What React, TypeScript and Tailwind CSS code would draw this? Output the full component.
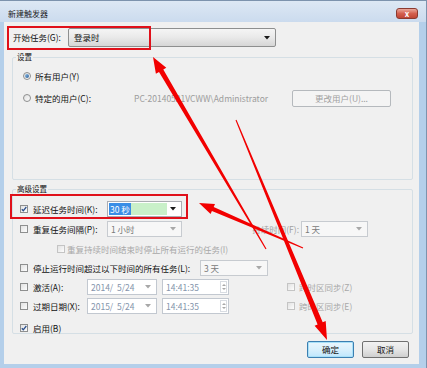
import clsx from "clsx"

// 红色标注箭头：从细的尾部到粗的头部
function arrowPoints(tx: number, ty: number, hx: number, hy: number, w0: number, w1: number, hl: number, hw: number) {
  const dx = hx - tx
  const dy = hy - ty
  const len = Math.hypot(dx, dy)
  const ux = dx / len
  const uy = dy / len
  const nx = -uy
  const ny = ux
  const bx = hx - ux * hl
  const by = hy - uy * hl
  const p = (x: number, y: number) => `${x.toFixed(1)},${y.toFixed(1)}`
  return [
    p(tx + (nx * w0) / 2, ty + (ny * w0) / 2),
    p(bx + (nx * w1) / 2, by + (ny * w1) / 2),
    p(bx + (nx * hw) / 2, by + (ny * hw) / 2),
    p(hx, hy),
    p(bx - (nx * hw) / 2, by - (ny * hw) / 2),
    p(bx - (nx * w1) / 2, by - (ny * w1) / 2),
    p(tx - (nx * w0) / 2, ty - (ny * w0) / 2),
  ].join(" ")
}

function DownArrow({ disabled }: { disabled?: boolean }) {
  return (
    <svg width="6" height="4" viewBox="0 0 6 4" className="shrink-0">
      <polygon points="0,0 6,0 3,3.5" fill={disabled ? "#a8a8a8" : "#1a1a1a"} />
    </svg>
  )
}

function Check({ checked, disabled }: { checked?: boolean; disabled?: boolean }) {
  return (
    <span
      className={clsx(
        "flex h-[8px] w-[8px] shrink-0 items-center justify-center border bg-linear-to-br from-[#e2e2e2] to-[#fdfdfd]",
        disabled ? "border-[#c4c4c4]" : "border-[#8e8f8f]",
      )}
    >
      {checked && (
        <svg width="6" height="6" viewBox="0 0 6 6">
          <path d="M0.8 3.2 L2.3 4.8 L5.3 1" stroke="#2b4f8c" strokeWidth="1.3" fill="none" />
        </svg>
      )}
    </span>
  )
}

function Radio({ checked }: { checked?: boolean }) {
  return (
    <span className="flex h-[8px] w-[8px] shrink-0 items-center justify-center rounded-full border border-[#8e8f8f] bg-linear-to-br from-[#e0e0e0] to-[#fcfcfc]">
      {checked && <span className="h-[4px] w-[4px] rounded-full bg-linear-to-br from-[#8fc0e8] to-[#2a5d96]" />}
    </span>
  )
}

function DateBox({ text, w, spin }: { text: string; w: string; spin?: boolean }) {
  return (
    <div className={clsx("flex h-[16px] items-center justify-between border border-[#c2c8d0] bg-white pl-[3px] text-[#8494ab]", w)}>
      <span className="whitespace-pre">{text}</span>
      {spin ? (
        <div className="mr-[1px] flex h-[12px] w-[7px] flex-col items-center justify-center gap-[2px] border border-[#d8dce2]">
          <svg width="4" height="2" viewBox="0 0 4 2">
            <polygon points="0,2 4,2 2,0" fill="#a8a8a8" />
          </svg>
          <svg width="4" height="2" viewBox="0 0 4 2">
            <polygon points="0,0 4,0 2,2" fill="#a8a8a8" />
          </svg>
        </div>
      ) : (
        <span className="mr-[5px]">
          <DownArrow disabled />
        </span>
      )}
    </div>
  )
}

export default function App() {
  return (
    <div className="relative h-[368px] w-[427px] overflow-hidden bg-[#b4cfea] font-['Noto_Sans_CJK_SC',sans-serif] text-[8.5px] leading-none text-[#111]">
      <div className="flex h-[368px] flex-col border-r border-t border-[#7d93ad]">
        {/* 标题栏 */}
        <div className="flex h-[21px] items-start bg-linear-to-b from-[#dde8f4] to-[#cbdbee]">
          <span className="ml-[8px] mt-[9px] text-[8px] text-[#1b1b1b]">新建触发器</span>
          <div className="ml-auto mr-[8px] mt-[7px] flex h-[11px] w-[22px] items-center justify-center rounded-[3px] border border-[#8b3a30] bg-linear-to-b from-[#e9a89c] via-[#d4604f] to-[#c04635] text-[8px] font-bold text-white">
            x
          </div>
        </div>

        {/* 客户区 */}
        <div className="ml-[4px] mr-[7px] flex h-[342px] flex-col bg-[#f0f0f0]">
          <div className="mt-[6px] flex h-[19px] items-center">
            <span className="ml-[9px] w-[55px]">开始任务(G):</span>
            <div className="flex h-[19px] w-[208px] items-center justify-between rounded-[2px] border border-[#8e8f8f] bg-linear-to-b from-[#f5f5f5] via-[#e9e9e9] to-[#d6d6d6] px-[5px]">
              <span>登录时</span>
              <DownArrow />
            </div>
          </div>

          {/* 设置 */}
          <div className="ml-[8px] mt-[10px] flex h-[123px] w-[401px] flex-col rounded-[2px] border border-[#d5dfe5]">
            <span className="-mt-[6px] ml-[3px] self-start bg-[#f0f0f0] px-[1px] text-[7.5px] leading-[10px]">设置</span>
            <div className="ml-[10px] mt-[7px] flex h-[14px] items-center gap-[4px]">
              <Radio checked />
              <span>所有用户(Y)</span>
            </div>
            <div className="ml-[10px] mt-[7px] flex h-[16px] items-center">
              <div className="flex w-[111px] items-center gap-[4px]">
                <Radio />
                <span>特定的用户(C):</span>
              </div>
              <span className="w-[158px] text-[#9c9c9c]">PC-20140521VCWW\Administrator</span>
              <div className="flex h-[17px] w-[99px] items-center justify-center rounded-[2px] border border-[#b5b9bd] bg-[#f4f4f4] text-[#a0a0a0]">
                更改用户(U)...
              </div>
            </div>
          </div>

          {/* 高级设置 */}
          <div className="ml-[8px] mt-[9px] flex h-[145px] w-[401px] flex-col rounded-[2px] border border-[#d5dfe5]">
            <span className="-mt-[6px] ml-[3px] self-start bg-[#f0f0f0] px-[1px] text-[7.5px] leading-[10px]">高级设置</span>

            <div className="ml-[7px] mt-[7px] flex h-[16px] items-center">
              <div className="flex w-[87px] items-center gap-[5px]">
                <Check checked />
                <span>延迟任务时间(K):</span>
              </div>
              <div className="flex h-[16px] w-[75px] items-center border border-[#abadb3] bg-white pl-[1px] pr-[5px]">
                <span className="bg-[#3a8ee6] px-[1px] py-[2px] text-white">30 秒</span>
                <span className="h-[12px] w-[36px] bg-[#c9f0c9]" />
                <span className="ml-auto">
                  <DownArrow />
                </span>
              </div>
            </div>

            <div className="ml-[7px] mt-[4px] flex h-[16px] items-center">
              <div className="flex w-[87px] items-center gap-[5px]">
                <Check />
                <span>重复任务间隔(P):</span>
              </div>
              <div className="flex h-[16px] w-[75px] items-center justify-between border border-[#c7cbd0] bg-[#f7f7f7] pl-[3px] pr-[5px] text-[#7a7a7a]">
                <span>1 小时</span>
                <DownArrow disabled />
              </div>
              <span className="w-[119px] pr-[2px] text-right text-[#a0a0a0]">持续时间(F):</span>
              <div className="flex h-[16px] w-[67px] items-center justify-between border border-[#c7cbd0] bg-[#f7f7f7] pl-[3px] pr-[5px] text-[#7a7a7a]">
                <span>1 天</span>
                <DownArrow disabled />
              </div>
            </div>

            <div className="ml-[44px] mt-[5px] flex h-[14px] items-center gap-[2px]">
              <Check disabled />
              <span className="text-[#a8a8a8]">重复持续时间结束时停止所有运行的任务(I)</span>
            </div>

            <div className="ml-[7px] mt-[4px] flex h-[16px] items-center">
              <div className="flex w-[180px] items-center gap-[5px]">
                <Check />
                <span>停止运行时间超过以下时间的所有任务(L):</span>
              </div>
              <div className="flex h-[16px] w-[68px] items-center justify-between border border-[#c7cbd0] bg-[#f7f7f7] pl-[3px] pr-[5px] text-[#7a7a7a]">
                <span>3 天</span>
                <DownArrow disabled />
              </div>
            </div>

            <div className="ml-[7px] mt-[3px] flex h-[16px] items-center">
              <div className="flex w-[67px] items-center gap-[5px]">
                <Check />
                <span>激活(A):</span>
              </div>
              <DateBox text="2014/  5/24" w="w-[70px]" />
              <div className="ml-[5px]">
                <DateBox text="14:41:35" w="w-[67px]" spin />
              </div>
              <div className="ml-[58px] flex items-center gap-[4px] text-[#a8a8a8]">
                <Check disabled />
                <span>跨时区同步(Z)</span>
              </div>
            </div>

            <div className="ml-[7px] mt-[3px] flex h-[16px] items-center">
              <div className="flex w-[67px] items-center gap-[5px]">
                <Check />
                <span>过期日期(X):</span>
              </div>
              <DateBox text="2015/  5/24" w="w-[70px]" />
              <div className="ml-[5px]">
                <DateBox text="14:41:35" w="w-[67px]" spin />
              </div>
              <div className="ml-[58px] flex items-center gap-[4px] text-[#a8a8a8]">
                <Check disabled />
                <span>跨时区同步(E)</span>
              </div>
            </div>

            <div className="ml-[7px] mt-[9px] flex h-[10px] items-center gap-[5px]">
              <Check checked />
              <span>启用(B)</span>
            </div>
          </div>

          {/* 按钮 */}
          <div className="mt-[7px] flex justify-end gap-[8px] pr-[10px]">
            <div className="flex h-[17px] w-[47px] items-center justify-center rounded-[2px] border border-[#3c7fb1] bg-linear-to-b from-[#eaf6fd] via-[#d9f0fc] to-[#bee6fd] shadow-[inset_0_0_0_1px_#a8e0f8]">
              确定
            </div>
            <div className="flex h-[17px] w-[47px] items-center justify-center rounded-[2px] border border-[#707070] bg-linear-to-b from-[#f2f2f2] via-[#e6e6e6] to-[#cfcfcf]">
              取消
            </div>
          </div>
        </div>
      </div>

      {/* 截图上的红色标注 */}
      <svg className="pointer-events-none absolute inset-0" width="427" height="368" viewBox="0 0 427 368">
        <rect x="8" y="27" width="142" height="22" fill="none" stroke="#e0101a" strokeWidth="2" />
        <rect x="11" y="195" width="176" height="23" fill="none" stroke="#e0101a" strokeWidth="2" />
        <polygon points={arrowPoints(266, 249, 153, 57, 1.2, 5, 16, 12)} fill="#f20000" />
        <polygon points={arrowPoints(236, 120, 327, 340, 1, 5.5, 18, 12)} fill="#f20000" />
        <polygon points={arrowPoints(303, 248, 199, 203, 1, 4.5, 15, 11)} fill="#f20000" />
      </svg>
    </div>
  )
}
